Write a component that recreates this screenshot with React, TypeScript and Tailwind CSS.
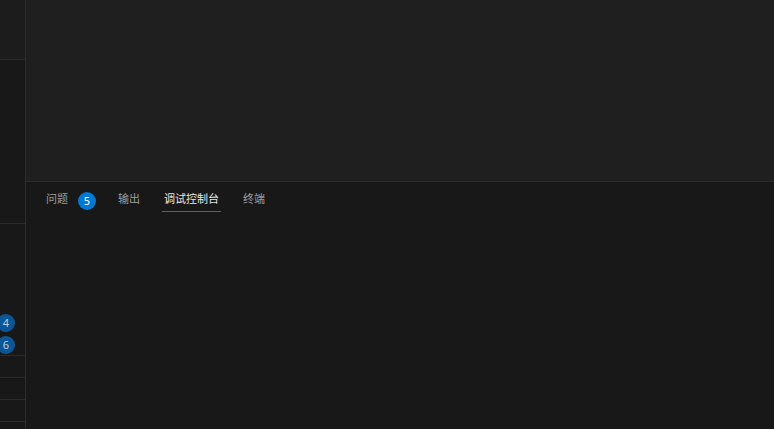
import React from "react";

const font = "font-['Noto_Sans_CJK_SC','Noto_Sans',sans-serif]";

function SideBadge({ n }: { n: string }) {
  return (
    <div className="h-[22px] flex items-center justify-end pr-[10px] pt-[2px]">
      <div className="w-[18px] h-[18px] shrink-0 rounded-full bg-[#0b5696] text-[#b9cde2] text-[11px] leading-[18px] text-center font-['Noto_Sans',sans-serif]">
        {n}
      </div>
    </div>
  );
}

function Tab({ label, active }: { label: string; active?: boolean }) {
  return (
    <div className="mt-[4px] h-[26px] flex flex-col">
      <div
        className={
          "h-[25px] px-[2px] leading-[25px] text-[11px] " +
          (active ? "text-[#e7e7e7]" : "text-[#9d9d9d]")
        }
      >
        {label}
      </div>
      <div className={"h-[1px] " + (active ? "bg-[#0078d4]" : "bg-transparent")} />
    </div>
  );
}

export default function App() {
  return (
    <div className={"w-[774px] h-[429px] flex overflow-hidden bg-[#181818] " + font}>
      {/* sidebar */}
      <div className="w-[26px] h-full shrink-0 flex flex-col border-r border-[#2b2b2b] bg-[#181818] overflow-hidden">
        <div className="h-[60px] shrink-0 border-b border-[#2b2b2b] bg-[#1c1c1c]" />
        <div className="h-[164px] shrink-0 border-b border-[#2b2b2b]" />
        <div className="h-[132px] shrink-0 border-b border-[#2b2b2b] flex flex-col justify-end">
          <SideBadge n="4" />
          <SideBadge n="6" />
        </div>
        <div className="h-[22px] shrink-0 border-b border-[#2b2b2b]" />
        <div className="h-[22px] shrink-0 border-b border-[#2b2b2b]" />
        <div className="h-[22px] shrink-0 border-b border-[#2b2b2b]" />
        <div className="flex-1" />
      </div>
      {/* main */}
      <div className="flex-1 flex flex-col">
        <div className="h-[182px] shrink-0 bg-[#1f1f1f] border-b border-[#2b2b2b]" />
        <div className="flex-1 bg-[#181818]">
          <div className="h-[35px] flex items-start pl-[18px]">
            <Tab label="问题" />
            <div className="ml-[8px] mt-[10px] w-[18px] h-[18px] rounded-full bg-[#0078d4] text-white text-[11px] leading-[18px] text-center font-['Noto_Sans',sans-serif]">
              5
            </div>
            <div className="ml-[20px]">
              <Tab label="输出" />
            </div>
            <div className="ml-[20px]">
              <Tab label="调试控制台" active />
            </div>
            <div className="ml-[20px]">
              <Tab label="终端" />
            </div>
          </div>
        </div>
      </div>
    </div>
  );
}
